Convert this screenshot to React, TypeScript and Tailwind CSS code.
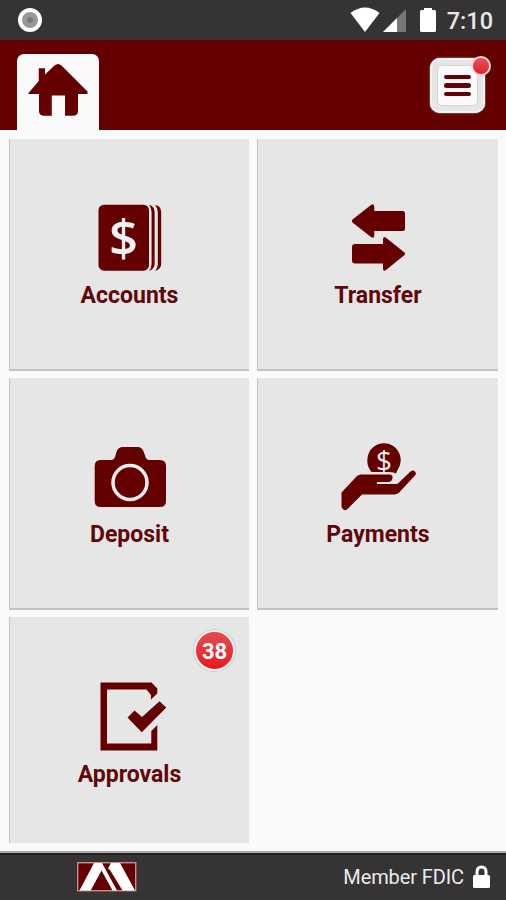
import React from 'react';

interface TileProps {
  label: string;
  icon: React.ReactNode;
  labelClass?: string;
  className?: string;
  badge?: number;
}

const AccountsIcon = () => (
  <svg width="80" height="75" viewBox="89 200 80 75" fill="#650000">
    <rect x="98.5" y="204.7" width="50.5" height="66" rx="5.5" />
    <path d="M149 205Q154.6 206 154.6 212V264Q154.6 269 149 271Q151.6 268 151.6 264V212Q151.6 208 149 205Z" />
    <path d="M155 205Q161.2 206 161.2 212V264Q161.2 269 155 271Q157.8 268 157.8 264V212Q157.8 208 155 205Z" />
    <text x="123.7" y="256" textAnchor="middle" fill="#f3f1f1" className="font-['Open_Sans',sans-serif] text-[51px] font-semibold">$</text>
  </svg>
);

const TransferIcon = () => (
  <svg width="80" height="75" viewBox="338 200 80 75" fill="#650000">
    <path d="M352.5 219.5L371 205Q374.3 203 374.3 207V211H402.5Q405 211 405 213.5V228.5Q405 231 402.5 231H374.3V235.5Q374.3 239 371 237L352.5 222.5Q351 221 352.5 219.5Z" />
    <path d="M404.2 252.3L386 237.7Q383 235.5 383 239.5V244H355Q352 244 352 247V260.5Q352 263.5 355 263.5H383V268.5Q383 272 386 270L404.2 255.3Q406 253.8 404.2 252.3Z" />
  </svg>
);

const DepositIcon = () => (
  <svg width="80" height="75" viewBox="89 439 80 75" fill="#650000">
    <path d="M100.5 460H111Q114 460 115 457L116.5 452Q118 447 123 447H137.5Q142 447 143.8 452L145.5 457Q146.5 460 149.5 460H160Q166 460 166 466V501Q166 507 160 507H100.5Q94.7 507 94.7 501V466Q94.7 460 100.5 460Z" />
    <circle cx="130" cy="482.5" r="17" fill="none" stroke="#f1eeee" strokeWidth="3.5" />
  </svg>
);

const PaymentsIcon = () => (
  <svg width="80" height="75" viewBox="338 439 80 75" fill="#650000">
    <path d="M371.5 472Q367.3 467 367.3 460.5A16.7 16.7 0 1 1 398 469L396 473.5Q394 472 390 472Z" />
    <text x="384" y="470.5" textAnchor="middle" fill="#f3f1f1" className="font-['Open_Sans',sans-serif] text-[28px] font-medium">$</text>
    <path d="M341.5 492.5L357 476Q358.5 474.5 361 474.5H389.5Q393 474.5 392.5 478Q392 482 388 482H377V484H396Q398 484 400 481.5L410.5 471.5Q413 469.5 415 471.5Q417 473.5 414.5 476L401 490.5Q398 494.5 394 494.5H362L347.5 509Q345.5 511 343.5 509.5Q341.5 509 341.5 506Z" />
  </svg>
);

const ApprovalsIcon = () => (
  <svg width="80" height="75" viewBox="89 678 80 75" fill="#650000">
    <path d="M100.5 682.5H151.5L157.3 688.5V693.5L151 699.5V695L146.5 689.5H107V743.5H151.3V731L157.3 725V750.5H100.5Z" />
    <path d="M127.5 717.5L134.5 710.5L142 717L159.5 701.2L166.3 707.5L141.8 732.2Z" />
  </svg>
);

const HomeIcon = () => (
  <svg width="60" height="54" viewBox="28 63 60 54" fill="#650000">
    <path d="M28.5 93L38.8 81V68.3H45V74.5L54.5 65.5Q58 62.5 61.5 65.5L87.5 91.5V94H78V111Q78 115.7 73 115.7H65V95.5H51.8V115.7H44Q39 115.7 39 111V94H28.5Z" />
  </svg>
);

const LogoIcon = () => (
  <svg width="60" height="30" viewBox="0 0 60 30">
    <rect x="0.7" y="0.7" width="58" height="28" fill="#650000" stroke="#c78e8e" strokeWidth="1.4" />
    <path d="M2.5 28.5L17 1H25L40 28.5H35.5L24.5 8.5L13.7 28.5Z" fill="#fff" />
    <path d="M31 6.5L34 1H43L58 28.5H45.5L33 8Z" fill="#fff" />
  </svg>
);

const Tile: React.FC<TileProps> = ({ label, icon, labelClass = 'mt-[7px]', className = '', badge }) => (
  <div className={`relative flex flex-col items-center bg-[#e6e6e6] pt-[61px] border-l border-[#c2c2c2] ${className}`}>
    <div className="pr-px">{icon}</div>
    <span className={`text-[23px] leading-[28px] font-bold text-[#610609] ${labelClass}`}>{label}</span>
    {badge !== undefined && (
      <span className="absolute top-[13px] right-[14px] flex h-[41px] w-[41px] items-center justify-center rounded-full border-[2px] border-[#f4f4f4] bg-linear-to-b from-[#e34a50] to-[#e8101c] pt-px text-[22px] font-bold text-white shadow-[0_0_0_1px_#cacaca]">
        {badge}
      </span>
    )}
  </div>
);

const StatusBar = () => (
  <div className="flex h-[40px] items-center justify-between bg-[#353334] pr-[13px] pl-[18px] text-white">
    <div className="flex h-6 w-6 items-center justify-center rounded-full border-[4.5px] border-white bg-[#999]">
      <div className="h-[6px] w-[6px] rounded-full bg-[#777]" />
    </div>
    <div className="flex items-center">
      <svg width="90" height="26" viewBox="350 7 90 26" fill="#fff">
        <path d="M351.5 13Q366 2 380.5 13L366 32Z" />
        <path d="M407 9V32H384Z" fill="#777" />
        <path d="M398 18V32H384Z" />
        <path d="M425 8H433V10H435.5Q437 10 437 11.5V30.5Q437 32 435.5 32H422.5Q421 32 421 30.5V11.5Q421 10 422.5 10H425Z" />
      </svg>
      <span className="mt-[2px] ml-[8px] text-[23.5px] leading-[28px] font-medium text-[#e8e8e8]">7:10</span>
    </div>
  </div>
);

const Header = () => (
  <div className="flex h-[90px] justify-between bg-[#650000] pr-[21px] pl-[17px]">
    <button className="mt-[14px] flex h-[76px] w-[82px] justify-center rounded-t-[7px] bg-[#fafafa] pt-[9px]" aria-label="Home">
      <HomeIcon />
    </button>
    <button className="relative mt-[18px] h-[55px] w-[55px] rounded-[10px] bg-[#e5e5e5] p-[7px] shadow-[inset_0_0_0_2px_#f3f3f3,0_0_2px_#d9bcbc]" aria-label="Menu">
      <span className="flex h-[41px] w-[41px] flex-col items-center justify-center gap-[4px] rounded-[5px] border border-[#d4d4d4] bg-[#fafafa]">
        <span className="h-[4.5px] w-[27px] rounded-full bg-[#650009]" />
        <span className="h-[4.5px] w-[27px] rounded-full bg-[#650009]" />
        <span className="h-[4.5px] w-[27px] rounded-full bg-[#650009]" />
      </span>
      <span className="absolute -top-[2px] -right-[6px] h-[20px] w-[20px] rounded-full border-2 border-[#f4dada] bg-linear-to-b from-[#e74e56] to-[#e0202d]" />
    </button>
  </div>
);

const Footer = () => (
  <div className="flex h-[49px] items-center justify-between border-t-2 border-[#aaa] bg-[#353334] pr-[15px] pl-[77px] shadow-[inset_0_2px_0_#222021]">
    <LogoIcon />
    <div className="flex items-center">
      <span className="text-[20px] leading-[24px] tracking-[-0.1px] text-[#ececec]">Member FDIC</span>
      <svg className="ml-[8px]" width="19" height="24" viewBox="0 0 19 24" fill="#fff">
        <path d="M5 11V7Q5 2 9.5 2Q14 2 14 7V11" fill="none" stroke="#fff" strokeWidth="3" />
        <rect x="1" y="10" width="17" height="13" rx="1.5" />
      </svg>
    </div>
  </div>
);

export default function App() {
  return (
    <div className="flex h-[900px] w-[506px] flex-col overflow-hidden bg-[#fafafa] font-[Roboto,sans-serif]">
      <StatusBar />
      <Header />
      <main className="grid flex-1 grid-cols-[240px_241px] grid-rows-[232px_232px_226px] gap-x-[8px] gap-y-[7px] pt-[9px] pl-[9px]">
        <Tile label="Accounts" icon={<AccountsIcon />} className="border-b-2" />
        <Tile label="Transfer" icon={<TransferIcon />} className="border-b-2" />
        <Tile label="Deposit" icon={<DepositIcon />} className="border-b-2" />
        <Tile label="Payments" icon={<PaymentsIcon />} className="border-b-2" />
        <Tile label="Approvals" icon={<ApprovalsIcon />} labelClass="mt-[8px]" badge={38} />
      </main>
      <Footer />
    </div>
  );
}
